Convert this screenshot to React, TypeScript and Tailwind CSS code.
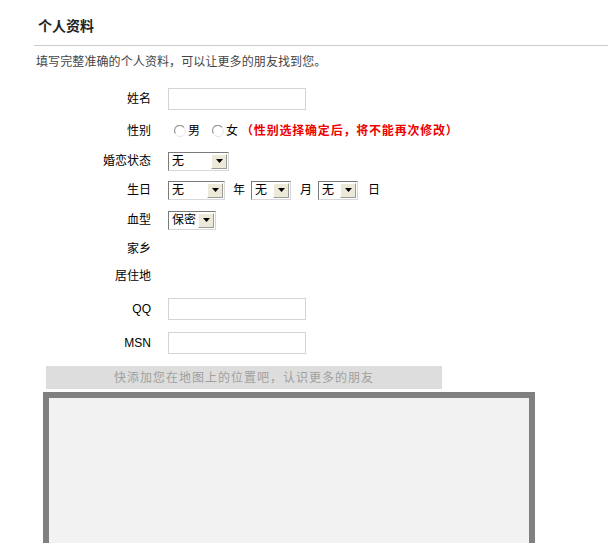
import React from "react";

const font = { fontFamily: '"Liberation Sans", "Noto Sans CJK SC", sans-serif' };

function Radio() {
  return (
    <svg width="12" height="12" viewBox="0 0 12 12" className="shrink-0">
      <circle cx="6" cy="6" r="5.5" fill="#fff" />
      <path d="M10 2.5 A5 5 0 0 0 1.5 8.5" fill="none" stroke="#9a9a9a" strokeWidth="1.2" />
      <path d="M2.5 9.8 A5 5 0 0 0 10.2 3.2" fill="none" stroke="#e4e4e4" strokeWidth="1" />
    </svg>
  );
}

function Select({ w, text }: { w: string; text: string }) {
  return (
    <div
      className={`${w} h-[19px] flex items-stretch border border-t-[#7a7a7a] border-l-[#7a7a7a] border-r-[#d8d8d8] border-b-[#d8d8d8] bg-white p-[1px]`}
    >
      <div className="flex-1 flex items-center pl-[2px] text-[12px] text-black leading-none">
        {text}
      </div>
      <div className="w-[16px] flex items-center justify-center bg-[#ece9d8] border border-t-[#ffffff] border-l-[#ffffff] border-r-[#9a9a9a] border-b-[#9a9a9a]">
        <svg width="7" height="4" viewBox="0 0 7 4">
          <path d="M0 0 H7 L3.5 4 Z" fill="#000" />
        </svg>
      </div>
    </div>
  );
}

function Row({ h, label, children }: { h: string; label: string; children?: React.ReactNode }) {
  return (
    <div className={`flex items-center ${h}`}>
      <div className="w-[117px] text-right text-[12px] text-black leading-none">{label}</div>
      <div className="ml-[17px] flex items-center">{children}</div>
    </div>
  );
}

function TextInput() {
  return <div className="w-[138px] h-[22px] border border-[#d4d4d4] bg-white" />;
}

export default function App() {
  return (
    <div className="w-[608px] h-[543px] overflow-hidden bg-white" style={font}>
      <div className="pl-[34px]">
        <div className="h-[46px] border-b border-[#cccccc] pl-[4px] pt-[17px]">
          <div className="text-[14px] font-bold text-[#222] leading-[18px]">个人资料</div>
        </div>
        <div className="pl-[2px] pt-[8px] text-[12px] text-[#444] leading-[16px] tracking-[0.1px]">
          填写完整准确的个人资料，可以让更多的朋友找到您。
        </div>
        <div className="mt-[14px]">
          <Row h="h-[30px]" label="姓名">
            <TextInput />
          </Row>
          <Row h="h-[33px]" label="性别">
            <div className="flex items-center text-[12px] leading-none">
              <span className="ml-[6px]"><Radio /></span>
              <span className="ml-[2px]">男</span>
              <span className="ml-[12px]"><Radio /></span>
              <span className="ml-[2px]">女</span>
              <span className="ml-[3px] font-bold text-[#ee0000] tracking-[0.8px]">（性别选择确定后，将不能再次修改）</span>
            </div>
          </Row>
          <Row h="h-[28px]" label="婚恋状态">
            <Select w="w-[61px]" text="无" />
          </Row>
          <Row h="h-[30px]" label="生日">
            <div className="flex items-center text-[12px] leading-none">
              <Select w="w-[57px]" text="无" />
              <span className="ml-[8px] mr-[6px]">年</span>
              <Select w="w-[40px]" text="无" />
              <span className="ml-[9px] mr-[6px]">月</span>
              <Select w="w-[40px]" text="无" />
              <span className="ml-[10px]">日</span>
            </div>
          </Row>
          <Row h="h-[30px]" label="血型">
            <Select w="w-[48px]" text="保密" />
          </Row>
          <Row h="h-[27px]" label="家乡" />
          <Row h="h-[28px]" label="居住地" />
          <Row h="h-[38px]" label="QQ">
            <TextInput />
          </Row>
          <Row h="h-[30px]" label="MSN">
            <TextInput />
          </Row>
        </div>
        <div className="ml-[12px] mt-[8px] w-[396px] h-[23px] bg-[#dddddd] flex items-center justify-center text-[12px] text-[#a0a0a0] tracking-[1px]">
          快添加您在地图上的位置吧，认识更多的朋友
        </div>
        <div className="ml-[9px] mt-[3px] w-[492px] h-[300px] border-[6px] border-[#808080] bg-[#f2f2f2]" />
      </div>
    </div>
  );
}
